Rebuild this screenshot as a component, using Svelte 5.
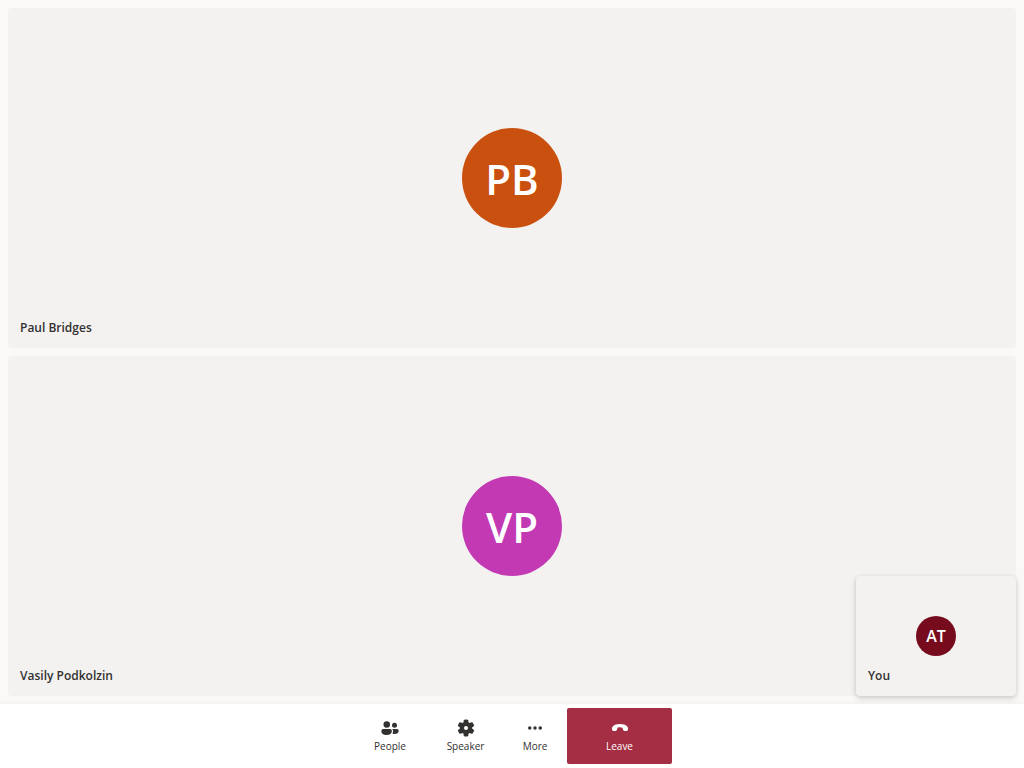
<script>
  const participants = [
    { name: 'Paul Bridges', initials: 'PB', tone: 'orange' },
    { name: 'Vasily Podkolzin', initials: 'VP', tone: 'magenta' }
  ];
</script>

<div class="call">
  <main class="stage">
    {#each participants as person}
      <section class="tile" aria-label={person.name}>
        <div class="avatar {person.tone}">{person.initials}</div>
        <span class="name">{person.name}</span>
      </section>
    {/each}
    <section class="tile self" aria-label="You">
      <div class="avatar small">AT</div>
      <span class="name">You</span>
    </section>
  </main>

  <footer class="bar">
    <button type="button" class="people">
      <svg viewBox="0 0 20 20" aria-hidden="true">
        <circle cx="6.75" cy="6.5" r="3.25" />
        <circle cx="14.5" cy="7.25" r="2.5" />
        <path d="M3.25 11H10a1.900 1.900 0 0 1 1.900 1.900c0 2.600-2.200 4.100-5.250 4.100S1.350 15.500 1.350 12.900A1.900 1.900 0 0 1 3.250 11Z" />
        <path d="M12.250 11H17a1.750 1.750 0 0 1 1.750 1.750c0 2-1.600 3.250-4.250 3.250-.75 0-1.400-.1-2-.3.350-.75.500-1.600.500-2.700 0-.75-.25-1.450-.75-2Z" />
      </svg>
      <span>People</span>
    </button>
    <button type="button" class="speaker">
      <svg viewBox="0 0 20 20" aria-hidden="true">
        <path d="M1.910 7.380A8.500 8.500 0 0 1 3.700 4.300a.5.5 0 0 1 .54-.13l1.920.68a1 1 0 0 0 1.320-.76l.36-2a.5.5 0 0 1 .4-.4 8.530 8.530 0 0 1 3.550 0c.2.04.35.2.38.4l.37 2a1 1 0 0 0 1.320.76l1.920-.68a.5.5 0 0 1 .54.13 8.500 8.500 0 0 1 1.780 3.080c.06.2 0 .4-.15.54l-1.560 1.320a1 1 0 0 0 0 1.520l1.560 1.320a.5.5 0 0 1 .15.54 8.500 8.500 0 0 1-1.780 3.080.5.5 0 0 1-.54.13l-1.920-.68a1 1 0 0 0-1.320.76l-.37 2a.5.5 0 0 1-.38.4 8.530 8.530 0 0 1-3.560 0 .5.5 0 0 1-.39-.4l-.36-2a1 1 0 0 0-1.320-.76l-1.920.68a.5.5 0 0 1-.54-.13 8.500 8.500 0 0 1-1.780-3.080.5.5 0 0 1 .15-.54l1.560-1.320a1 1 0 0 0 0-1.520L2.060 7.920a.5.5 0 0 1-.15-.54ZM8 10a2 2 0 1 0 4 0 2 2 0 0 0-4 0Z" />
      </svg>
      <span>Speaker</span>
    </button>
    <button type="button">
      <svg viewBox="0 0 20 20" aria-hidden="true">
        <circle cx="4.750" cy="10" r="1.750" />
        <circle cx="10" cy="10" r="1.750" />
        <circle cx="15.250" cy="10" r="1.750" />
      </svg>
      <span>More</span>
    </button>
    <button type="button" class="leave">
      <svg viewBox="0 0 20 20" aria-hidden="true">
        <path d="M18 10.900l-.16.880c-.15.820-.9 1.340-1.740 1.260l-1.640-.16c-.72-.08-1.260-.6-1.460-1.330l-.5-1.750A6.600 6.600 0 0 0 10 9.300c-.9 0-1.700.16-2.500.5L7 11.550c-.2.730-.74 1.250-1.460 1.330l-1.640.16c-.84.080-1.590-.44-1.740-1.260L2 10.900c-.17-.93.130-1.870.800-2.520C4.400 6.800 6.800 6 10 6s5.600.8 7.200 2.380c.67.650.970 1.590.8 2.520Z" />
      </svg>
      <span>Leave</span>
    </button>
  </footer>
</div>

<style>
  :global(body) {
    margin: 0;
  }

  .call {
    display: flex;
    flex-direction: column;
    min-height: 100vh;
    background: #faf9f8;
    color: #323130;
    font-family: "Segoe UI", "Open Sans", sans-serif;
  }

  .stage {
    position: relative;
    flex: 1;
    display: grid;
    grid-auto-rows: 1fr;
    gap: 8px;
    padding: 8px;
  }

  .tile {
    box-sizing: border-box;
    display: grid;
    grid-template: 1fr auto 1fr / 1fr;
    padding: 12px;
    border-radius: 4px;
    background: #f3f2f1;
  }

  .avatar {
    grid-row: 2;
    justify-self: center;
    display: flex;
    align-items: center;
    justify-content: center;
    width: 100px;
    height: 100px;
    border-radius: 50%;
    color: #fff;
    font-size: 42px;
    font-weight: 600;
  }

  .orange {
    background: #ca5010;
  }

  .magenta {
    background: #c239b3;
  }

  .small {
    width: 40px;
    height: 40px;
    background: #750b1c;
    font-size: 16px;
  }

  .name {
    grid-row: 3;
    align-self: end;
    font-size: 12px;
    font-weight: 600;
    line-height: 16px;
  }

  .self {
    position: absolute;
    right: 8px;
    bottom: 8px;
    width: 160px;
    height: 120px;
    box-shadow: 0 1px 4px rgba(0, 0, 0, 0.11), 0 3px 7px rgba(0, 0, 0, 0.11);
  }

  .bar {
    position: relative;
    display: flex;
    justify-content: center;
    padding: 4px;
    background: #fff;
    box-shadow: 0 0 6px rgba(0, 0, 0, 0.05);
  }

  button {
    display: flex;
    flex-direction: column;
    align-items: center;
    justify-content: center;
    min-width: 64px;
    height: 56px;
    padding: 0;
    border: 0;
    border-radius: 2px;
    background: transparent;
    color: inherit;
    font: 400 10px/16px "Segoe UI", "Open Sans", sans-serif;
  }

  .people {
    min-width: 76px;
  }

  .speaker {
    min-width: 75px;
  }

  .leave {
    min-width: 105px;
    background: #a42e43;
    color: #fff;
  }

  svg {
    width: 20px;
    height: 20px;
    fill: currentColor;
  }
</style>
